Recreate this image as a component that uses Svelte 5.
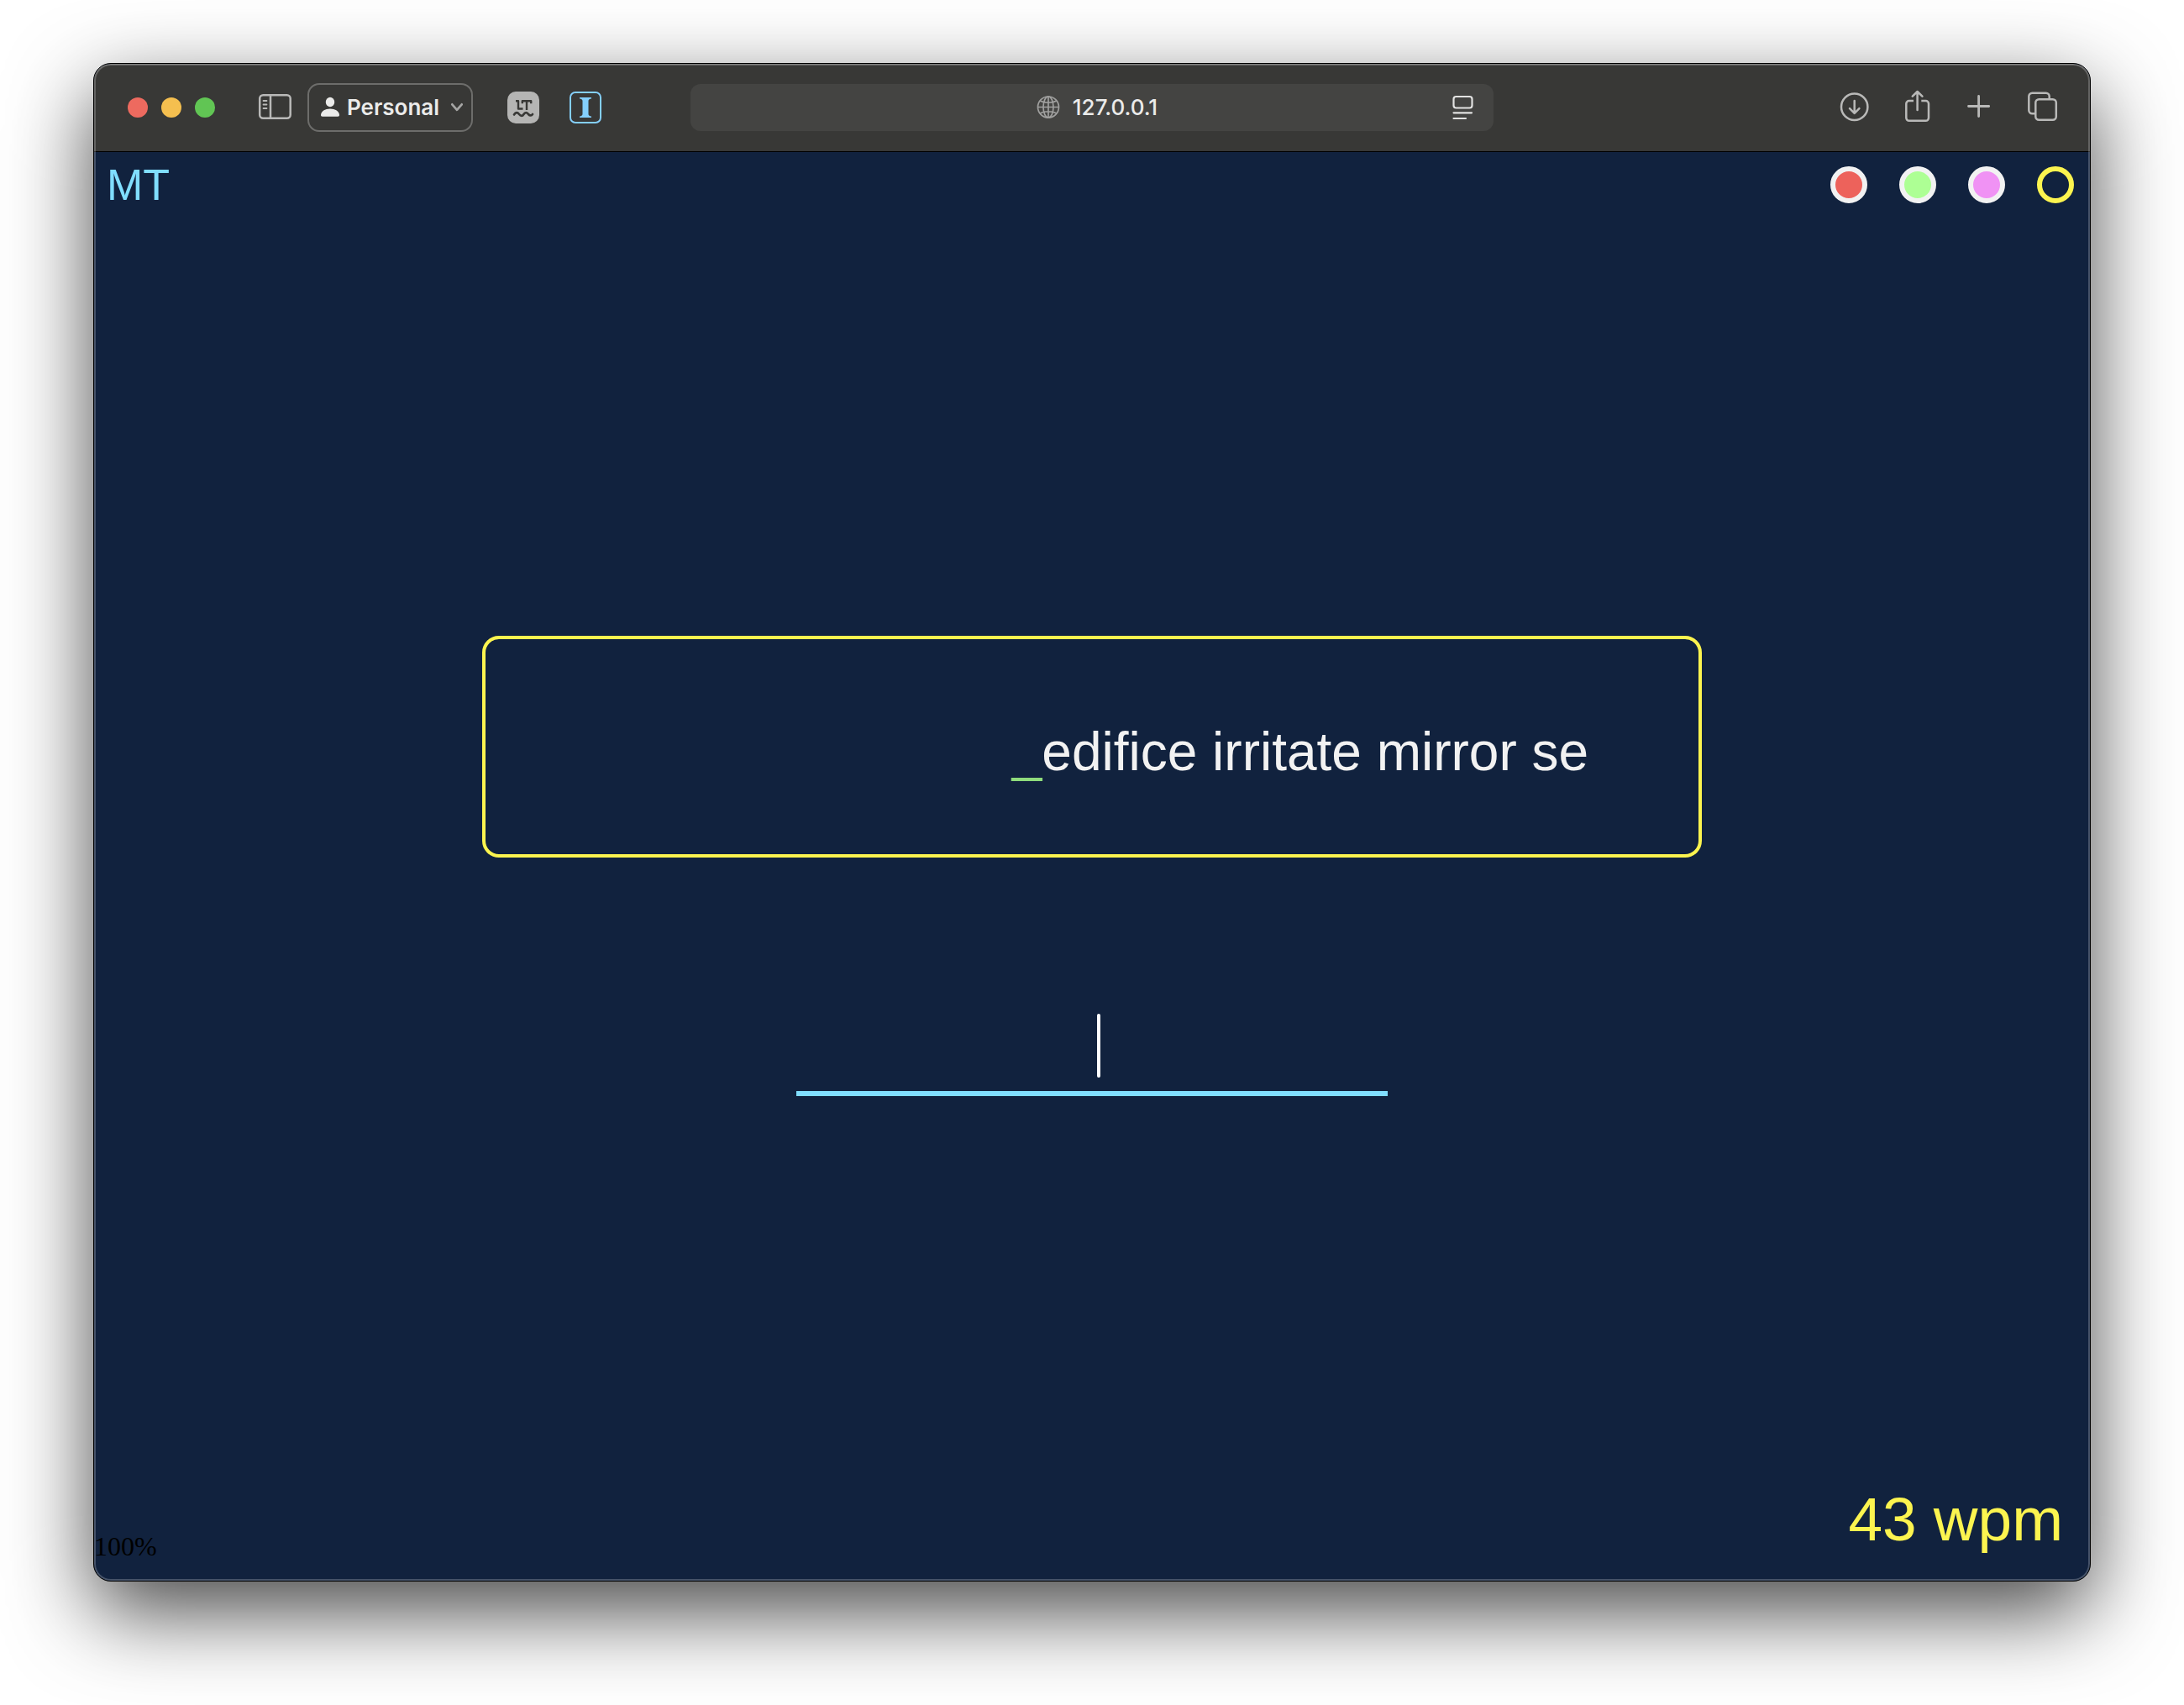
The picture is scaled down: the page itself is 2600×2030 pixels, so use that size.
<script>
  const themes = [
    { name: 'red', fill: 'red' },
    { name: 'green', fill: 'green' },
    { name: 'violet', fill: 'violet' },
    { name: 'navy', fill: 'navy' }
  ];
  const typed = ' '.repeat(28);
  const upcoming = 'edifice irritate mirror se';
  let entry = $state('');
  let active = $state('navy');
</script>

<div class="desktop">
  <div class="window">
    <header class="toolbar">
      <div class="left">
        <div class="lights">
          <button class="light close" aria-label="Close"></button>
          <button class="light minimise" aria-label="Minimise"></button>
          <button class="light zoom" aria-label="Zoom"></button>
        </div>
        <button class="icon sidebar" aria-label="Sidebar">
          <svg width="40" height="32" viewBox="0 0 40 32" fill="none" stroke="#b9b9b8" stroke-width="2.500">
            <rect x="2.200" y="1.200" width="36.500" height="27.500" rx="4" />
            <path d="M15 1.200V28.700" />
            <path d="M6.500 8h4M6.500 12.500h4M6.500 17h4" stroke-width="1.800" stroke-linecap="round" />
          </svg>
        </button>
        <button class="profile">
          <svg width="22" height="24" viewBox="0 0 22 24" fill="#ebebea">
            <ellipse cx="11" cy="5.500" rx="5.200" ry="5.800" />
            <path d="M0 21C0 16.500 5 13.500 11 13.500s11 3 11 7.500c0 1.200-.6 1.700-1.800 1.700H1.800C.6 22.700 0 22.200 0 21Z" />
          </svg>
          <span>Personal</span>
          <svg class="chevron" width="14" height="10" viewBox="0 0 14 10" fill="none" stroke="#a5a5a4" stroke-width="2.700" stroke-linecap="round" stroke-linejoin="round">
            <path d="M1.300 1.300L7 7.800L12.700 1.300" />
          </svg>
        </button>
        <button class="icon lt" aria-label="LanguageTool">
          <svg width="38" height="38" viewBox="0 0 38 38" fill="none">
            <rect width="38" height="38" rx="10" fill="#b5b5b4" />
            <path d="M10 11.300h3v9.200h5.500M17.800 14.200v-2.900h10.400v2.900M23 11.500v10.500" stroke="#383836" stroke-width="2.400" stroke-linejoin="round" />
            <path d="M8 27.500c2-3 4-3 6-.5s4 2.500 5.500 0 4-2.500 5.500 0c2 2.200 3.800 1.700 5 0" stroke="#383836" stroke-width="2.700" stroke-linecap="round" />
          </svg>
        </button>
        <button class="icon" aria-label="Instapaper">
          <svg width="38" height="38" viewBox="0 0 38 38" fill="none">
            <rect x="1" y="1" width="36" height="36" rx="6" stroke="#84cffc" stroke-width="2" />
            <path d="M12 7h14v1.500c-2.600.4-3.500 1-3.500 3v15c0 2 .9 2.600 3.500 3V31H12v-1.500c2.600-.4 3.500-1 3.500-3v-15c0-2-.9-2.600-3.500-3Z" fill="#84cffc" />
          </svg>
        </button>
      </div>

      <div class="address">
        <span class="host">
          <svg width="28" height="28" viewBox="0 0 28 28" fill="none" stroke="#a0a09f" stroke-width="1.700">
            <circle cx="14" cy="13.500" r="12.500" />
            <ellipse cx="14" cy="13.500" rx="6" ry="12.500" />
            <path d="M14 1v25M1.500 13.500h25M4 6c5.500 3 14.500 3 20 0M4 21c5.500-3 14.500-3 20 0" />
          </svg>
          <span>127.0.0.1</span>
        </span>
        <button class="icon reader" aria-label="Page menu">
          <svg width="24" height="30" viewBox="0 0 24 30" fill="none" stroke="#e2e2e1" stroke-width="2.200" stroke-linecap="round">
            <rect x="1.500" y="2" width="22" height="13.500" rx="3" />
            <path d="M1.500 21.300h21.500M1.500 28h14.500" />
          </svg>
        </button>
      </div>

      <div class="right">
        <button class="icon" aria-label="Downloads">
          <svg width="34" height="40" viewBox="0 0 34 40" fill="none" stroke="#b9b9b8" stroke-width="2.500" stroke-linecap="round" stroke-linejoin="round">
            <circle cx="17.700" cy="19.300" r="15.700" />
            <path d="M17.700 12v14.700M12 21.200l5.700 5.700 5.700-5.700" />
          </svg>
        </button>
        <button class="icon" aria-label="Share">
          <svg width="30" height="40" viewBox="0 0 30 40" fill="none" stroke="#b9b9b8" stroke-width="2.500" stroke-linecap="round" stroke-linejoin="round">
            <path d="M10 12H4.800a3.500 3.500 0 0 0-3.500 3.500V32.300a3.500 3.500 0 0 0 3.500 3.500H24.500a3.500 3.500 0 0 0 3.500-3.500V15.500a3.500 3.500 0 0 0-3.500-3.500h-5.200" stroke-linecap="butt" />
            <path d="M14.600 23V1.300M8.800 6.700l5.800-5.700 5.800 5.700" />
          </svg>
        </button>
        <button class="icon" aria-label="New tab">
          <svg width="28" height="40" viewBox="0 0 28 40" stroke="#b9b9b8" stroke-width="2.800" stroke-linecap="round">
            <path d="M13.600 6.400v24.200M1.500 18.500h24.200" />
          </svg>
        </button>
        <button class="icon" aria-label="Tab overview">
          <svg width="36" height="40" viewBox="0 0 36 40" fill="none" stroke="#b9b9b8" stroke-width="2.500">
            <rect x="9.300" y="10.200" width="24.500" height="24.500" rx="4" />
            <path d="M9 27.200H5.300a4 4 0 0 1-4-4V6.800a4 4 0 0 1 4-4H21.700a4 4 0 0 1 4 4V10" />
          </svg>
        </button>
      </div>
    </header>

    <main class="page">
      <div class="top">
        <a class="brand" href="/">MT</a>
        <div class="themes">
          {#each themes as theme}
            <button
              class="theme {theme.fill}"
              class:active={active === theme.name}
              aria-label="{theme.name} theme"
              onclick={() => (active = theme.name)}
            ></button>
          {/each}
        </div>
      </div>

      <div class="trainer">
        <div class="words">{typed}<span class="cursor">_</span>{upcoming}</div>
        <div class="field">
          <input type="text" aria-label="Type the words" bind:value={entry} />
          <span class="caret"></span>
        </div>
      </div>

      <div class="bottom">
        <span class="accuracy">100%</span>
        <span class="speed">43 wpm</span>
      </div>
    </main>
  </div>
</div>

<style>
  :global(body) {
    background: #fff;
  }
  * {
    box-sizing: border-box;
  }
  button {
    margin: 0;
    padding: 0;
    border: 0;
    background: none;
    color: inherit;
    font: inherit;
  }
  svg {
    display: block;
    flex: none;
    overflow: visible;
  }
  .desktop {
    display: flex;
    min-height: 100vh;
    padding: 75px 111px 147px;
    overflow: hidden;
  }
  .window {
    position: relative;
    display: flex;
    flex: 1;
    flex-direction: column;
    min-width: 0;
    overflow: hidden;
    border: 1px solid #000;
    border-radius: 21px;
    background: #11223e;
    box-shadow: 0 36px 100px rgba(0, 0, 0, 0.72);
  }
  .window::after {
    position: absolute;
    inset: 0;
    border-radius: 20px;
    box-shadow:
      inset 0 1px 0 rgba(255, 255, 255, 0.2),
      inset 0 0 0 2px rgba(255, 255, 255, 0.22);
    content: '';
    pointer-events: none;
  }
  .toolbar {
    display: grid;
    grid-template-columns: 1fr minmax(0, 956px) 1fr;
    align-items: center;
    height: 105px;
    border-bottom: 1px solid #000;
    background: #383836;
    color: #ebebea;
    font: 500 26px/32px Inter, 'Liberation Sans', sans-serif;
  }
  .left,
  .right {
    display: flex;
    align-items: center;
  }
  .left {
    padding-left: 40px;
  }
  .lights {
    display: flex;
    gap: 16px;
  }
  .light {
    width: 24px;
    height: 24px;
    border-radius: 50%;
  }
  .close {
    background: #ed6a5f;
  }
  .minimise {
    background: #f5bf4f;
  }
  .zoom {
    background: #61c554;
  }
  .sidebar {
    margin-left: 51px;
  }
  .profile {
    display: flex;
    align-items: center;
    height: 58px;
    margin-left: 19px;
    padding: 0 10px 0 14px;
    border: 2px solid #6d6d6b;
    border-radius: 14px;
    font-weight: 600;
  }
  .profile span {
    margin-left: 9px;
  }
  .chevron {
    margin-left: 14px;
  }
  .lt {
    margin: 0 36px 0 41px;
  }
  .address {
    display: grid;
    grid-template-columns: 1fr auto 1fr;
    align-items: center;
    height: 56px;
    padding: 0 25px 0 37px;
    border-radius: 12px;
    background: #444442;
  }
  .host {
    display: flex;
    grid-column: 2;
    align-items: center;
    gap: 15px;
  }
  .reader {
    justify-self: end;
  }
  .right {
    gap: 44px;
    justify-content: flex-end;
    padding-right: 38px;
  }
  .page {
    display: grid;
    flex: 1;
    grid-template-rows: 1fr auto 1fr;
    padding-bottom: 1px;
    color: #f2f2f2;
    font-family: 'Liberation Sans', Arial, sans-serif;
  }
  .top {
    display: flex;
    align-items: center;
    align-self: start;
    justify-content: space-between;
    padding: 17px 19px 0 15px;
  }
  .brand {
    color: #80deff;
    font-size: 52px;
    line-height: 44px;
    text-decoration: none;
  }
  .themes {
    display: flex;
    gap: 38px;
  }
  .theme {
    width: 44px;
    height: 44px;
    border: 6px solid #f2f2f2;
    border-radius: 50%;
  }
  .red {
    background: #ed625b;
  }
  .green {
    background: #adff94;
  }
  .violet {
    background: #f092f4;
  }
  .navy {
    background: #11223e;
  }
  .active {
    border-color: #fcf44f;
  }
  .trainer {
    display: flex;
    flex-direction: column;
    gap: 170px;
    align-items: center;
  }
  .words {
    width: min(1452px, 100%);
    padding: 94px 2px 82px 0;
    overflow: hidden;
    border: 4px solid #fcf44f;
    border-radius: 20px;
    font-size: 64px;
    line-height: 80px;
    text-align: center;
    white-space: pre;
  }
  .cursor {
    color: #8fdc7c;
  }
  .field {
    display: grid;
    width: min(704px, 100%);
  }
  .field input {
    grid-area: 1 / 1;
    width: 100%;
    height: 114px;
    padding: 16px 0;
    border: 0;
    border-bottom: 6px solid #80deff;
    border-radius: 0;
    outline: 0;
    background: none;
    color: inherit;
    font: 64px/76px 'Liberation Sans', Arial, sans-serif;
    text-align: center;
  }
  .caret {
    grid-area: 1 / 1;
    justify-self: center;
    width: 4px;
    height: 76px;
    margin: 16px 0 0 16px;
    border-radius: 2px;
    background: #fff;
    pointer-events: none;
  }
  .bottom {
    display: flex;
    align-items: flex-end;
    align-self: end;
    justify-content: space-between;
    padding: 0 32px 22px 0;
  }
  .accuracy {
    color: #000;
    font: 32px/36px 'Liberation Serif', 'Times New Roman', serif;
  }
  .speed {
    color: #fcf44f;
    font-size: 73px;
    line-height: 100px;
  }
</style>
